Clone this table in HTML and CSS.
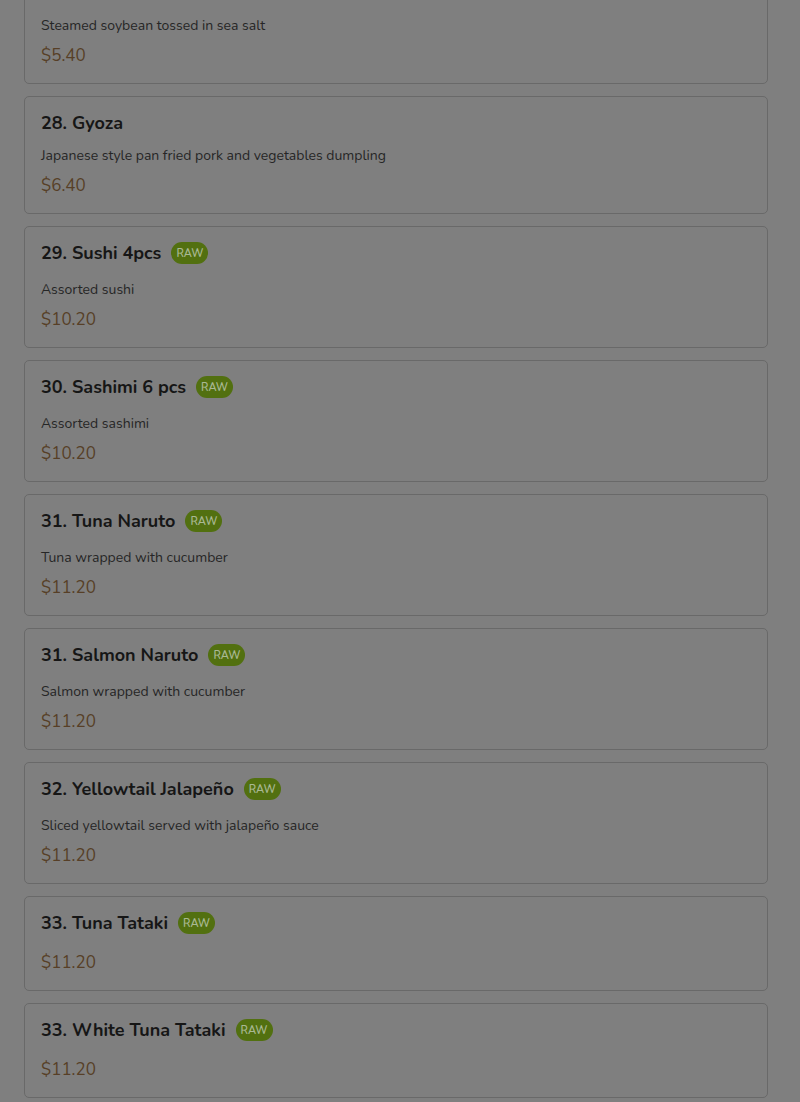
FILE: index.html
```html
<!DOCTYPE html>
<html>
<head>
<meta charset="utf-8">
<link rel="stylesheet" href="styles.css">
</head>
<body>
<main class="menu">
  <article class="card">
    <div class="head"><h3 class="title">27. Edamame</h3></div>
    <p class="desc">Steamed soybean tossed in sea salt</p>
    <p class="price">$5.40</p>
  </article>
  <article class="card">
    <div class="head"><h3 class="title">28. Gyoza</h3></div>
    <p class="desc">Japanese style pan fried pork and vegetables dumpling</p>
    <p class="price">$6.40</p>
  </article>
  <article class="card">
    <div class="head"><h3 class="title">29. Sushi 4pcs</h3><span class="badge">RAW</span></div>
    <p class="desc">Assorted sushi</p>
    <p class="price">$10.20</p>
  </article>
  <article class="card">
    <div class="head"><h3 class="title">30. Sashimi 6 pcs</h3><span class="badge">RAW</span></div>
    <p class="desc">Assorted sashimi</p>
    <p class="price">$10.20</p>
  </article>
  <article class="card">
    <div class="head"><h3 class="title">31. Tuna Naruto</h3><span class="badge">RAW</span></div>
    <p class="desc">Tuna wrapped with cucumber</p>
    <p class="price">$11.20</p>
  </article>
  <article class="card">
    <div class="head"><h3 class="title">31. Salmon Naruto</h3><span class="badge">RAW</span></div>
    <p class="desc">Salmon wrapped with cucumber</p>
    <p class="price">$11.20</p>
  </article>
  <article class="card">
    <div class="head"><h3 class="title">32. Yellowtail Jalapeño</h3><span class="badge">RAW</span></div>
    <p class="desc">Sliced yellowtail served with jalapeño sauce</p>
    <p class="price">$11.20</p>
  </article>
  <article class="card">
    <div class="head"><h3 class="title">33. Tuna Tataki</h3><span class="badge">RAW</span></div>
    <p class="price">$11.20</p>
  </article>
  <article class="card">
    <div class="head"><h3 class="title">33. White Tuna Tataki</h3><span class="badge">RAW</span></div>
    <p class="price">$11.20</p>
  </article>
</main>
</body>
</html>
```

FILE: styles.css
```css
html, body {
  margin: 0;
  padding: 0;
  background: #7f7f7f;
  overflow: hidden;
}
body {
  font-family: "Nunito", "Lato", "Noto Sans", sans-serif;
  color: #1a1a1a;
}
.menu {
  display: flex;
  flex-direction: column;
  gap: 12px;
  margin: -34px 32px 0 24px;
}
.card {
  border: 1px solid #696969;
  border-radius: 5px;
  padding: 15px 16px 15px;
  display: flex;
  flex-direction: column;
}
.head {
  display: flex;
  align-items: flex-start;
  gap: 10px;
}
.title {
  margin: 0;
  font-size: 18px;
  line-height: 22px;
  font-weight: 700;
  color: #161616;
}
.badge {
  height: 22px;
  line-height: 24px;
  padding: 0 5px;
  border-radius: 11px;
  background: #527010;
  color: #a9b893;
  font-size: 11px;
  font-weight: 600;
  margin-bottom: 4px;
}
.desc {
  margin: 12px 0 0;
  font-size: 14px;
  line-height: 20px;
  color: #262626;
}
.price {
  margin: 8px 0 0;
  font-size: 17px;
  line-height: 24px;
  color: #573f27;
}
.head + .price {
  margin-top: 13px;
}
```
